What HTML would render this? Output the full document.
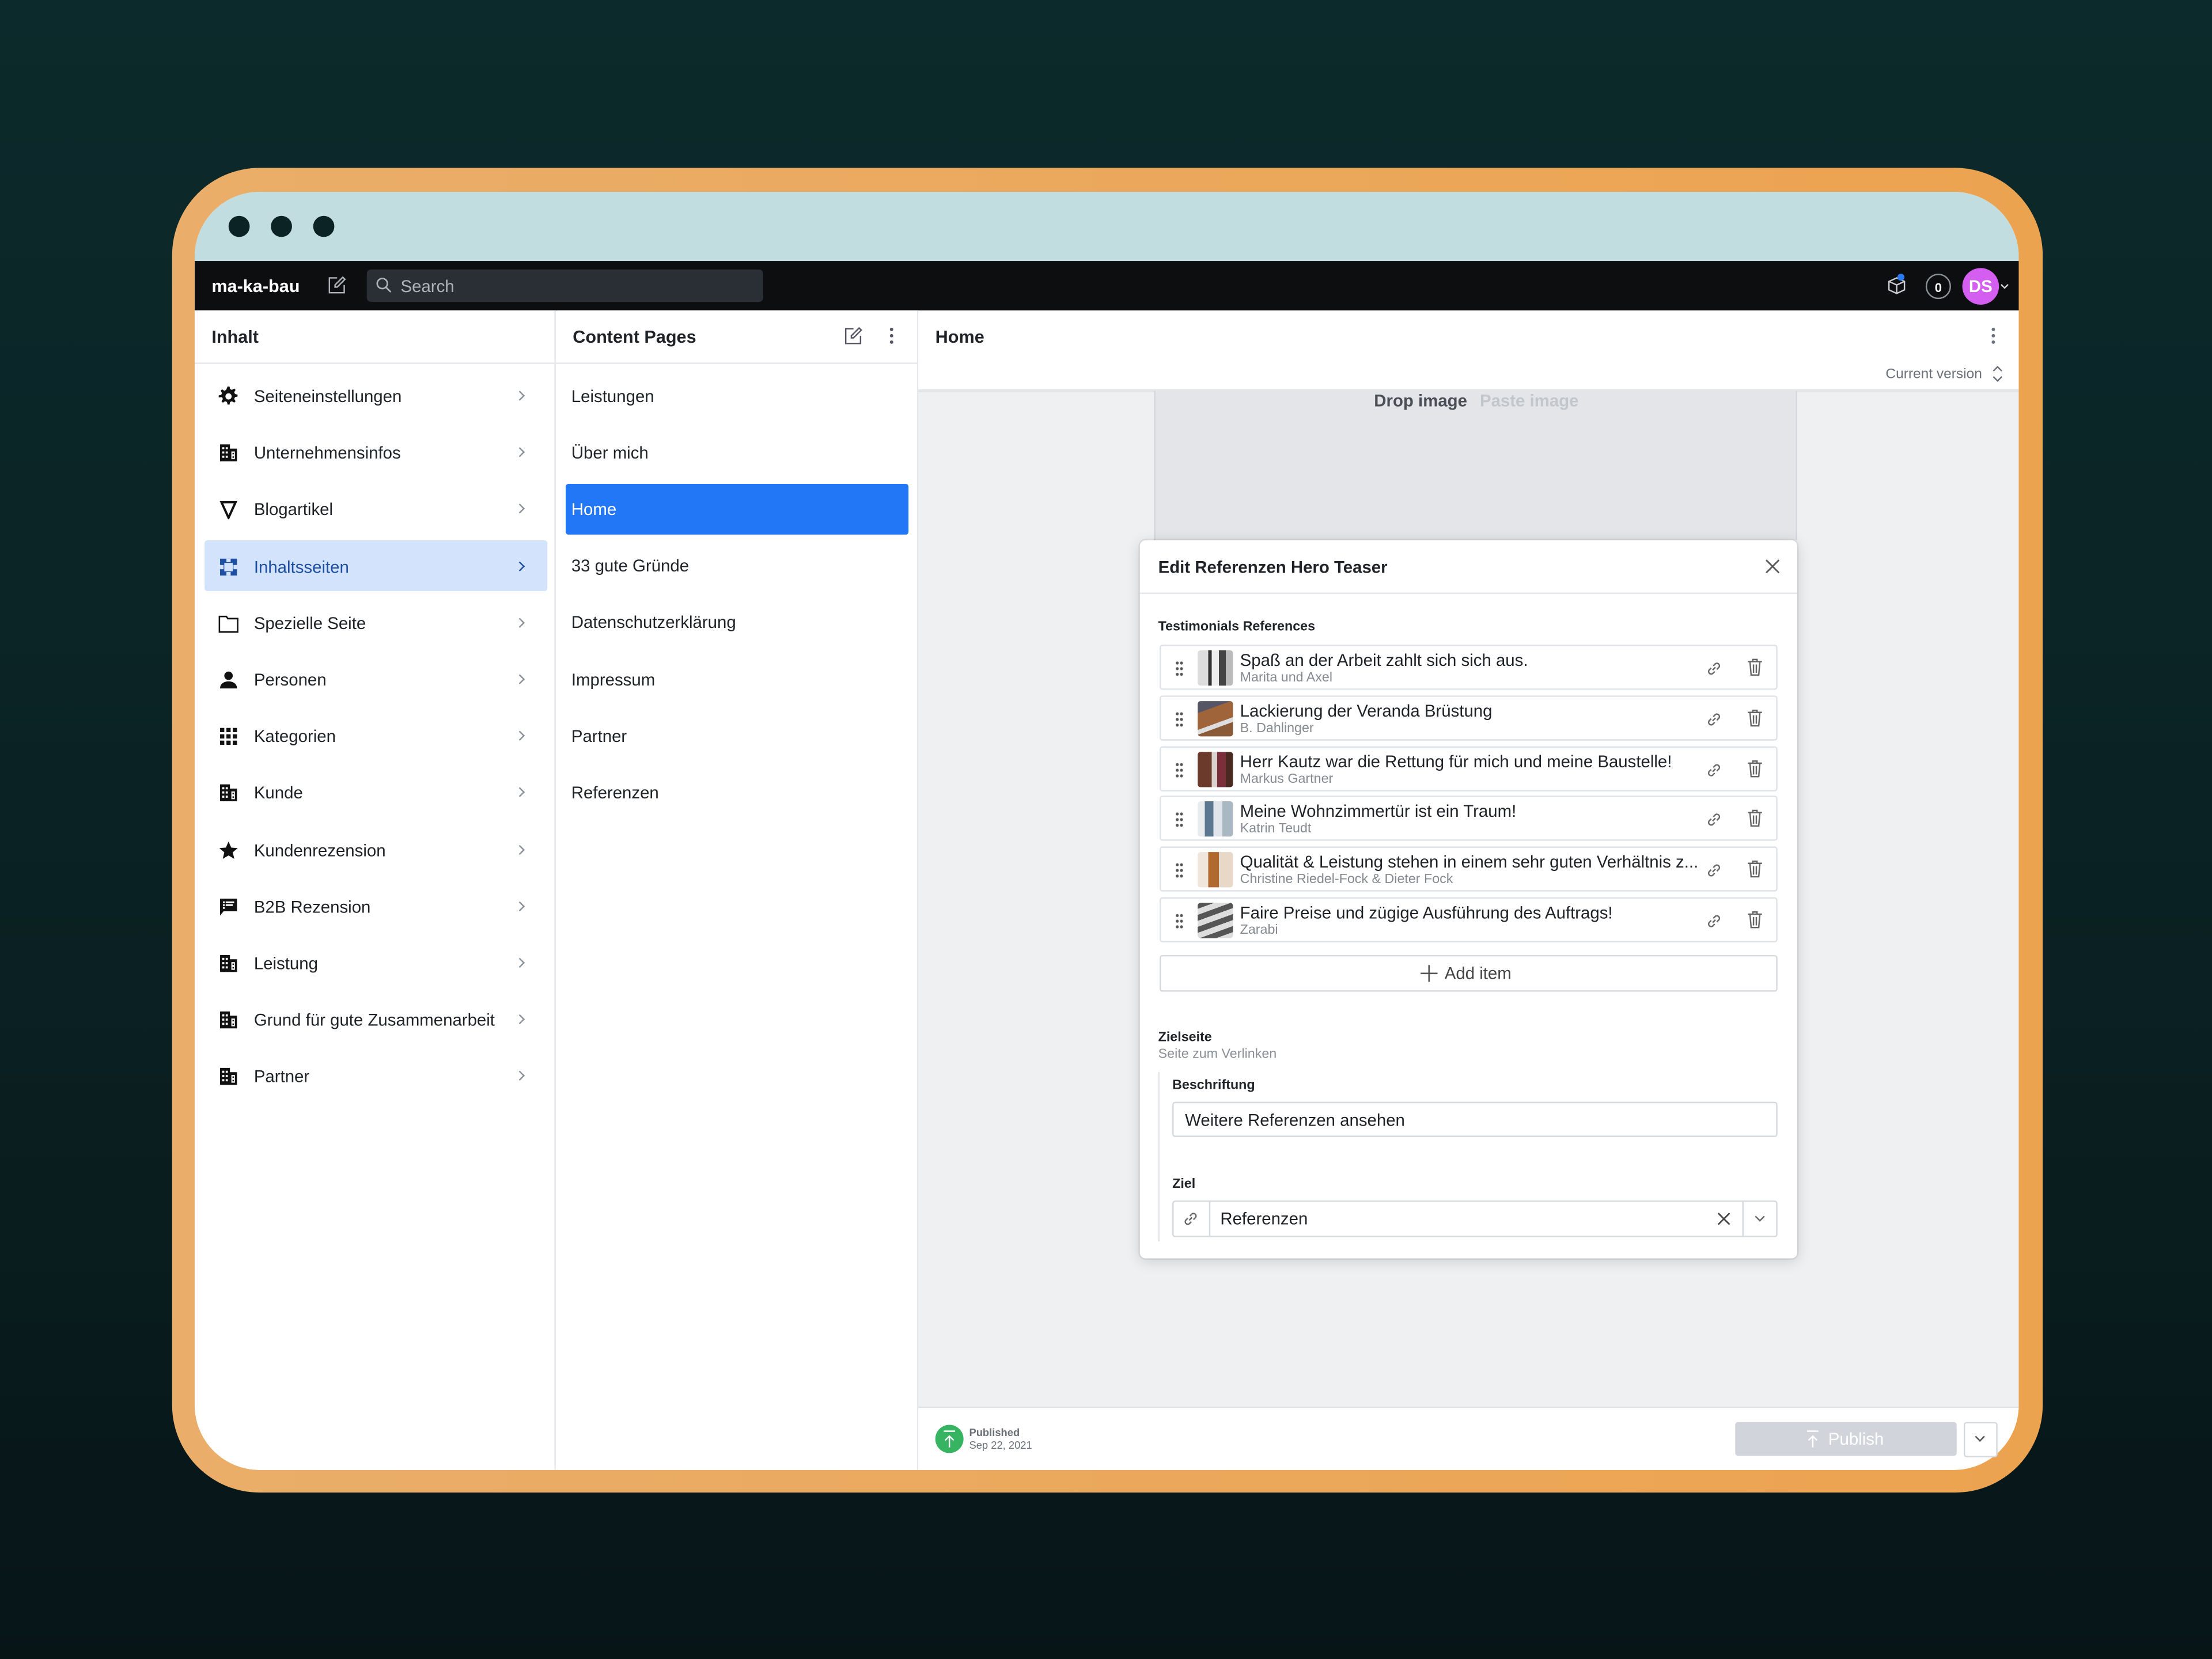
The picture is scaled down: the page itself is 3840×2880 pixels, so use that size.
<!DOCTYPE html>
<html><head><meta charset="utf-8"><style>
*{box-sizing:border-box;margin:0;padding:0}
html,body{width:3840px;height:2880px;overflow:hidden}
body{background:linear-gradient(180deg,#0c2a2b 0%,#0a2022 60%,#071517 100%);font-family:"Liberation Sans",sans-serif;color:#1f2328}
#w{position:absolute;left:0;top:0;width:1568px;height:1176px;transform:scale(2.44898);transform-origin:0 0}
.a{position:absolute}
.frame{left:122px;top:119px;width:1326px;height:939px;border-radius:62px;background:linear-gradient(90deg,#eaae6a,#eca350)}
.screen{left:138px;top:136px;width:1293px;height:906px;border-radius:46px;background:#fff;overflow:hidden}
.dot{width:15px;height:15px;border-radius:50%;background:#0b2325;top:153px}
.t{position:absolute;white-space:nowrap;font-size:12px;line-height:14px}
.b{font-weight:bold}
.chev{position:absolute;width:5px;height:5px;border-right:1px solid #8a9099;border-top:1px solid #8a9099;transform:rotate(45deg)}
.row{position:absolute;left:822px;width:438px;height:32px;border:1px solid #dfe2e6;border-radius:2px;background:#fff}
.thumb{position:absolute;left:26px;top:3px;width:25px;height:25px;border-radius:2px}
.grip{position:absolute;left:10px;top:10px;width:6px;height:12px;background:radial-gradient(circle,#555 0.9px,transparent 1.2px) 0 0/3px 4px}
</style></head><body><div id="w">
<div class="a frame"></div>
<div class="a screen">
 <div class="a" style="left:0;top:0;width:1293px;height:49px;background:#c1dde0"></div>
 <div class="a" style="left:0;top:49px;width:1293px;height:35px;background:#0d0e10"></div>
 <div class="a" style="left:0;top:84px;width:256px;height:822px;background:#fff;border-right:1px solid #e6e8eb"></div>
 <div class="a" style="left:257px;top:84px;width:256px;height:822px;background:#fff;border-right:1px solid #e6e8eb"></div>
 <div class="a" style="left:513px;top:141px;width:780px;height:720px;background:#eef0f2;border-top:1px solid #e1e3e6"></div>
 <div class="a" style="left:680px;top:141px;width:456px;height:106px;background:#e3e5e8;border-left:1px solid #d3d6da;border-right:1px solid #d3d6da"></div>
 <div class="a" style="left:513px;top:861px;width:780px;height:45px;background:#fff;border-top:1px solid #dcdfe3"></div>
</div>
<div class="a dot" style="left:162px"></div><div class="a dot" style="left:192px"></div><div class="a dot" style="left:222px"></div>
<!-- nav bar -->
<div class="t b" style="left:150px;top:196px;color:#fff;font-size:12.5px">ma-ka-bau</div>
<svg class="a" style="left:232px;top:195px" width="14" height="14" viewBox="0 0 14 14" fill="none" stroke="#aeb3ba" stroke-width="1"><path d="M7 2H1.5v10.5H12V7"/><path d="M11 1.5l1.5 1.5L7 8.5H5.5V7z"/></svg>
<div class="a" style="left:260px;top:191px;width:281px;height:23px;background:#2a2f36;border-radius:3px"></div>
<svg class="a" style="left:266px;top:196px" width="12" height="12" viewBox="0 0 12 12" fill="none" stroke="#aeb3ba" stroke-width="1.1"><circle cx="5" cy="5" r="3.6"/><path d="M7.6 7.6L11 11"/></svg>
<div class="t" style="left:284px;top:196px;color:#aeb3ba">Search</div>
<svg class="a" style="left:1337px;top:195px" width="16" height="15" viewBox="0 0 16 15" fill="none" stroke="#c9ccd1" stroke-width="1"><path d="M2 4.5l5.5-2.5 5.5 2.5v6L7.5 13 2 10.5z M2 4.5l5.5 2.5 5.5-2.5 M7.5 7v6"/></svg>
<div class="a" style="left:1345px;top:194px;width:5px;height:5px;border-radius:50%;background:#2b7bf5"></div>
<div class="a" style="left:1365px;top:194px;width:18px;height:18px;border-radius:50%;border:1px solid #8e939a"></div>
<div class="t b" style="left:1365px;top:197px;width:18px;text-align:center;color:#fff;font-size:9px">0</div>
<div class="a" style="left:1391px;top:190px;width:26px;height:26px;border-radius:50%;background:#d45ef0"></div>
<div class="t b" style="left:1391px;top:196px;width:26px;text-align:center;color:#fff;font-size:12px">DS</div>
<div class="chev" style="left:1419px;top:200px;transform:rotate(135deg);border-color:#ccc;width:4px;height:4px"></div>
<!-- headers -->
<div class="a" style="left:138px;top:257px;width:1293px;height:1px;background:#e6e8eb"></div>
<div class="t b" style="left:150px;top:232px;font-size:12.5px">Inhalt</div>
<div class="t b" style="left:406px;top:232px;font-size:12.5px">Content Pages</div>
<svg class="a" style="left:598px;top:231px" width="14" height="14" viewBox="0 0 14 14" fill="none" stroke="#556" stroke-width="1"><path d="M7 2H1.5v10.5H12V7"/><path d="M11 1.5l1.5 1.5L7 8.5H5.5V7z"/></svg>
<svg class="a" style="left:629px;top:231px" width="6" height="14"><circle cx="3" cy="2.5" r="1.2" fill="#556"/><circle cx="3" cy="7" r="1.2" fill="#556"/><circle cx="3" cy="11.5" r="1.2" fill="#556"/></svg>
<div class="a" style="left:651px;top:221px;width:780px;height:56px;background:#fff"></div>
<div class="a" style="left:651px;top:276px;width:780px;height:1px;background:#e1e3e6"></div>
<div class="t b" style="left:663px;top:232px;font-size:12.5px">Home</div>
<svg class="a" style="left:1410px;top:231px" width="6" height="14"><circle cx="3" cy="2.5" r="1.2" fill="#6a7080"/><circle cx="3" cy="7" r="1.2" fill="#6a7080"/><circle cx="3" cy="11.5" r="1.2" fill="#6a7080"/></svg>
<div class="t" style="left:1300px;top:259px;width:105px;text-align:right;font-size:10px;color:#6b7078">Current version</div>
<svg class="a" style="left:1411px;top:258px" width="10" height="14" fill="none" stroke="#6b7078" stroke-width="1"><path d="M2 5l3-3 3 3M2 9l3 3 3-3"/></svg>
<!-- left nav -->
<div class="a" style="left:145px;top:383px;width:243px;height:36px;background:#d3e3fc;border-radius:2px"></div>
<div id="nav"></div>
<!-- middle list -->
<div class="a" style="left:401px;top:343px;width:243px;height:36px;background:#2277f6;border-radius:2px"></div>
<div class="t" style="left:405px;top:274px">Leistungen</div>
<div class="t" style="left:405px;top:314px">Über mich</div>
<div class="t" style="left:405px;top:354px;color:#fff">Home</div>
<div class="t" style="left:405px;top:394px">33 gute Gründe</div>
<div class="t" style="left:405px;top:434px">Datenschutzerklärung</div>
<div class="t" style="left:405px;top:475px">Impressum</div>
<div class="t" style="left:405px;top:515px">Partner</div>
<div class="t" style="left:405px;top:555px">Referenzen</div>
<!-- drop image -->
<div class="t b" style="left:974px;top:277px;color:#4a4f57">Drop image</div>
<div class="t b" style="left:1049px;top:277px;color:#c3c7cc">Paste image</div>
<!-- modal -->
<div class="a" style="left:808px;top:383px;width:466px;height:509px;background:#fff;border-radius:4px;box-shadow:0 2px 10px rgba(0,0,0,.15),0 0 0 1px rgba(0,0,0,.06)"></div>
<div class="a" style="left:808px;top:420px;width:466px;height:1px;background:#e4e6e9"></div>
<div class="t b" style="left:821px;top:395px">Edit Referenzen Hero Teaser</div>
<svg class="a" style="left:1251px;top:396px" width="11" height="11" stroke="#555" stroke-width="1.1"><path d="M1 1l9 9M10 1l-9 9"/></svg>
<div class="t b" style="left:821px;top:438px;font-size:9.5px">Testimonials References</div>
<div id="rows"></div>
<div class="a" style="left:822px;top:677px;width:438px;height:26px;border:1px solid #d6d9dd;border-radius:2px"></div>
<svg class="a" style="left:1007px;top:684px" width="12" height="12" stroke="#555" stroke-width="1.1"><path d="M6 0v12M0 6h12"/></svg>
<div class="t" style="left:1024px;top:683px;color:#444">Add item</div>
<div class="t b" style="left:821px;top:729px;font-size:9.5px">Zielseite</div>
<div class="t" style="left:821px;top:741px;font-size:9.5px;color:#8a8f96">Seite zum Verlinken</div>
<div class="a" style="left:821px;top:760px;width:1px;height:120px;background:#e1e3e6"></div>
<div class="t b" style="left:831px;top:763px;font-size:9.5px">Beschriftung</div>
<div class="a" style="left:831px;top:781px;width:429px;height:25px;border:1px solid #d6d9dd;border-radius:2px"></div>
<div class="t" style="left:840px;top:787px">Weitere Referenzen ansehen</div>
<div class="t b" style="left:831px;top:833px;font-size:9.5px">Ziel</div>
<div class="a" style="left:831px;top:851px;width:429px;height:26px;border:1px solid #d6d9dd;border-radius:2px"></div>
<div class="a" style="left:857px;top:851px;width:1px;height:26px;background:#d6d9dd"></div>
<div class="a" style="left:1235px;top:851px;width:1px;height:26px;background:#d6d9dd"></div>
<svg class="a" style="left:838px;top:858px" width="12" height="12" fill="none" stroke="#666" stroke-width="1"><path d="M5 7l2-2M4 5.5L2.5 7a1.8 1.8 0 002.5 2.5L6.5 8M8 6.5L9.5 5A1.8 1.8 0 007 2.5L5.5 4"/></svg>
<div class="t" style="left:865px;top:857px">Referenzen</div>
<svg class="a" style="left:1217px;top:859px" width="10" height="10" stroke="#444" stroke-width="1.1"><path d="M1 1l8 8M9 1l-8 8"/></svg>
<div class="chev" style="left:1245px;top:860px;transform:rotate(135deg);border-color:#666"></div>
<!-- footer -->
<div class="a" style="left:663px;top:1010px;width:20px;height:20px;border-radius:50%;background:#36b462"></div>
<svg class="a" style="left:667px;top:1013px" width="12" height="14" stroke="#fff" stroke-width="1" fill="none"><path d="M2 1.5h8M6 13V5M3 8l3-3 3 3"/></svg>
<div class="t b" style="left:687px;top:1011px;font-size:7.5px;line-height:9px;color:#6b7078">Published</div>
<div class="t" style="left:687px;top:1020px;font-size:7.5px;line-height:9px;color:#6b7078">Sep 22, 2021</div>
<div class="a" style="left:1230px;top:1008px;width:157px;height:24px;background:#d1d5db;border-radius:2px"></div>
<svg class="a" style="left:1279px;top:1013px" width="12" height="14" stroke="#fff" stroke-width="1" fill="none"><path d="M2 1.5h8M6 13V5M3 8l3-3 3 3"/></svg>
<div class="t" style="left:1296px;top:1013px;color:#fff">Publish</div>
<div class="a" style="left:1392px;top:1008px;width:24px;height:25px;border:1px solid #d6d9dd;border-radius:2px;background:#fff"></div>
<div class="chev" style="left:1401px;top:1016px;transform:rotate(135deg);border-color:#555"></div>
</div>
<script>
var items=[["Seiteneinstellungen","gear"],["Unternehmensinfos","bld"],["Blogartikel","tri"],["Inhaltsseiten","puz"],["Spezielle Seite","fold"],["Personen","pers"],["Kategorien","grid"],["Kunde","bld"],["Kundenrezension","star"],["B2B Rezension","chat"],["Leistung","bld"],["Grund für gute Zusammenarbeit","bld"],["Partner","bld"]];
var ic={
gear:'<path fill="#111" d="M6.3 0h1.4l.4 1.8 1.3.6 1.6-1 1 1-1 1.6.6 1.3 1.8.4v1.4l-1.8.4-.6 1.3 1 1.6-1 1-1.6-1-1.3.6-.4 1.8H6.3l-.4-1.8-1.3-.6-1.6 1-1-1 1-1.6-.6-1.3L0 7.7V6.3l1.8-.4.6-1.3-1-1.6 1-1 1.6 1 1.3-.6z"/><circle cx="7" cy="7" r="2.2" fill="#fff"/>',
bld:'<path fill="#111" d="M1 1h7v3h5v9H1z"/><g fill="#fff"><rect x="2.5" y="3" width="1.5" height="1.5"/><rect x="5" y="3" width="1.5" height="1.5"/><rect x="2.5" y="6" width="1.5" height="1.5"/><rect x="5" y="6" width="1.5" height="1.5"/><rect x="2.5" y="9" width="1.5" height="1.5"/><rect x="5" y="9" width="1.5" height="1.5"/><rect x="9" y="6" width="2.5" height="5.5"/></g><rect x="9.8" y="7" width="1" height="1" fill="#111"/><rect x="9.8" y="9.5" width="1" height="1" fill="#111"/>',
tri:'<path fill="none" stroke="#111" stroke-width="1.6" d="M2 2h10L7 13z"/>',
puz:'<rect x="1" y="1" width="12" height="12" fill="#1f4fa3"/><g fill="#d3e3fc"><rect x="5.5" y="1" width="3" height="2.5"/><rect x="5.5" y="10.5" width="3" height="2.5"/><rect x="1" y="5.5" width="2.5" height="3"/><rect x="10.5" y="5.5" width="2.5" height="3"/><rect x="4" y="4" width="6" height="6"/></g>',
fold:'<path fill="none" stroke="#111" stroke-width="1.1" d="M.5 2h5l1 1.5h7V13H.5z"/>',
pers:'<circle cx="7" cy="4" r="3" fill="#111"/><path fill="#111" d="M1 13c0-3.5 3-5 6-5s6 1.5 6 5z"/>',
grid:'<g fill="#111"><rect x="1" y="1" width="3" height="3"/><rect x="5.5" y="1" width="3" height="3"/><rect x="10" y="1" width="3" height="3"/><rect x="1" y="5.5" width="3" height="3"/><rect x="5.5" y="5.5" width="3" height="3"/><rect x="10" y="5.5" width="3" height="3"/><rect x="1" y="10" width="3" height="3"/><rect x="5.5" y="10" width="3" height="3"/><rect x="10" y="10" width="3" height="3"/></g>',
star:'<path fill="#111" d="M7 .5l1.9 4.3 4.6.4-3.5 3 1.1 4.6L7 10.4 2.9 12.8 4 8.2.5 5.2l4.6-.4z"/>',
chat:'<path fill="#111" d="M1 1h12v9H3.5L1 13z"/><g fill="#fff"><rect x="3" y="3" width="1.3" height="1.2"/><rect x="5" y="3" width="6" height="1.2"/><rect x="3" y="5" width="1.3" height="1.2"/><rect x="5" y="5" width="5" height="1.2"/><rect x="3" y="7" width="1.3" height="1.2"/></g>'};
var h='';items.forEach(function(it,i){var y=281+i*40.2;var sel=i==3;
h+='<svg class="a" style="left:155px;top:'+(y-7)+'px" width="14" height="14" viewBox="0 0 14 14">'+ic[it[1]]+'</svg>';
h+='<div class="t" style="left:180px;top:'+(y-7)+'px;'+(sel?'color:#1f4fa3':'')+'">'+it[0]+'</div>';
h+='<div class="chev" style="left:366px;top:'+(y-3)+'px;'+(sel?'border-color:#1f4fa3':'')+'"></div>';});
document.getElementById('nav').outerHTML=h;
var rows=[["Spaß an der Arbeit zahlt sich sich aus.","Marita und Axel","linear-gradient(90deg,#ddd 0 30%,#333 30% 40%,#eee 40% 60%,#444 60% 80%,#bbb 80%)"],
["Lackierung der Veranda Brüstung","B. Dahlinger","linear-gradient(160deg,#556 0 25%,#a0643a 25% 60%,#ddd 60% 70%,#8a5a38 70%)"],
["Herr Kautz war die Rettung für mich und meine Baustelle!","Markus Gartner","linear-gradient(90deg,#6b3a2a 0 40%,#d9d2cf 40% 55%,#7a2f3b 55% 80%,#4a2a20 80%)"],
["Meine Wohnzimmertür ist ein Traum!","Katrin Teudt","linear-gradient(90deg,#e8ecef 0 20%,#5b7890 20% 45%,#dfe5ea 45% 70%,#aab8c4 70%)"],
["Qualität &amp; Leistung stehen in einem sehr guten Verhältnis z...","Christine Riedel-Fock &amp; Dieter Fock","linear-gradient(90deg,#f0e6dc 0 30%,#b06a30 30% 60%,#e8d8c8 60%)"],
["Faire Preise und zügige Ausführung des Auftrags!","Zarabi","repeating-linear-gradient(160deg,#555 0 4px,#ddd 4px 8px)"]];
var r='';rows.forEach(function(d,i){var y=457+i*35.8;
r+='<div class="row" style="top:'+y+'px"><div class="grip"></div><div class="thumb" style="background:'+d[2]+'"></div>'+
'<div class="t" style="left:56px;top:3px">'+d[0]+'</div><div class="t" style="left:56px;top:17px;font-size:9.5px;line-height:11px;color:#858a91">'+d[1]+'</div>'+
'<svg class="a" style="left:386px;top:10px" width="12" height="12" fill="none" stroke="#666" stroke-width="1"><path d="M5 7l2-2M4 5.5L2.5 7a1.8 1.8 0 002.5 2.5L6.5 8M8 6.5L9.5 5A1.8 1.8 0 007 2.5L5.5 4"/></svg>'+
'<svg class="a" style="left:415px;top:8px" width="12" height="14" fill="none" stroke="#666" stroke-width="1"><path d="M1 3h10M4.5 3V1.5h3V3M2.5 3l.8 9.5h5.4L9.5 3M5 5v6M7 5v6"/></svg></div>';});
document.getElementById('rows').outerHTML=r;
</script>
</body></html>
